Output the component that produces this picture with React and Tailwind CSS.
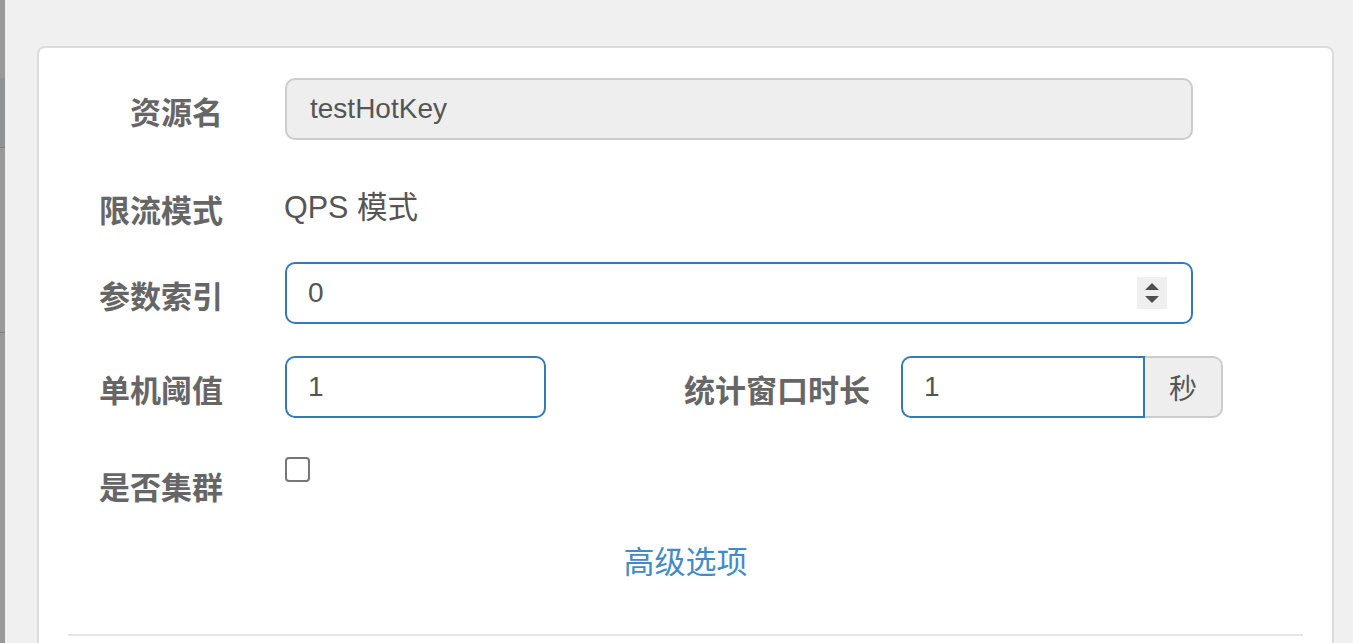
const label = "text-right font-bold text-[31px] leading-none text-[#666] [font-family:'Noto_Sans_CJK_SC',sans-serif]"
const latin = "[font-family:'Liberation_Sans','Noto_Sans_CJK_SC',sans-serif]"

function Spinner() {
  return (
    <div className="w-[30px] h-[32px] bg-[#efefef] flex items-center justify-center">
      <svg width="16" height="24" viewBox="0 0 16 24">
        <path d="M8 2 L15 9 L1 9 Z" fill="#4f4f4f" />
        <path d="M1 15 L15 15 L8 22 Z" fill="#4f4f4f" />
      </svg>
    </div>
  )
}

export default function App() {
  return (
    <div className="h-[643px] overflow-hidden bg-[#f0f0f0] flex">
      <div className="w-[5px] shrink-0 bg-[#999] flex flex-col">
        <div className="h-[78px]" />
        <div className="h-[69px] bg-[#8f9296]" />
        <div className="h-px bg-[#7f7f7f]" />
        <div className="h-[184px]" />
        <div className="h-px bg-[#7f7f7f]" />
      </div>

      <div className="ml-[32px] mt-[46px] w-[1297px] h-[640px] shrink-0 bg-white border-2 border-b-0 border-[#dcdcdc] rounded-t-[8px] pt-[30px]">
        <div className="flex items-center h-[62px]">
          <div className={`w-[184px] pt-[3px] ${label}`}>资源名</div>
          <div className={`ml-[62px] w-[908px] h-[62px] bg-[#eee] border-2 border-[#ccc] rounded-[10px] flex items-center pl-[23px] text-[28px] text-[#555] ${latin}`}>
            testHotKey
          </div>
        </div>

        <div className="flex items-center h-[62px] mt-[37px]">
          <div className={`w-[184px] ${label}`}>限流模式</div>
          <div className={`ml-[61px] text-[30.5px] text-[#555] ${latin}`}>QPS 模式</div>
        </div>

        <div className="flex items-center h-[62px] mt-[23px]">
          <div className={`w-[184px] pt-[2px] ${label}`}>参数索引</div>
          <div className={`ml-[62px] w-[908px] h-[62px] border-2 border-[#337ab7] rounded-[10px] flex items-center justify-between pl-[21px] pr-[24px] text-[28px] text-[#555] ${latin}`}>
            <span>0</span>
            <Spinner />
          </div>
        </div>

        <div className="flex items-center h-[62px] mt-[32px]">
          <div className={`w-[184px] pt-[2px] ${label}`}>单机阈值</div>
          <div className={`ml-[62px] w-[261px] h-[62px] border-2 border-[#337ab7] rounded-[10px] flex items-center pl-[21px] text-[28px] text-[#555] ${latin}`}>
            1
          </div>
          <div className={`w-[324px] pt-[2px] ${label}`}>统计窗口时长</div>
          <div className="ml-[31px] flex h-[62px]">
            <div className={`w-[244px] h-full border-2 border-[#337ab7] rounded-l-[10px] flex items-center pl-[21px] text-[28px] text-[#555] ${latin}`}>
              1
            </div>
            <div className="w-[78px] h-full bg-[#eee] border-2 border-l-0 border-[#ccc] rounded-r-[10px] flex items-center justify-center text-[28px] text-[#555] [font-family:'Noto_Sans_CJK_SC',sans-serif]">
              秒
            </div>
          </div>
        </div>

        <div className="flex h-[62px] mt-[36px]">
          <div className={`w-[184px] ${label} self-center`}>是否集群</div>
          <div className="ml-[62px] mt-[3px] w-[25px] h-[25px] border-2 border-[#767676] rounded-[4px] bg-white" />
        </div>

        <div className="mt-[24px] h-[40px] flex items-center justify-center text-[31px] text-[#428bca] [font-family:'Noto_Sans_CJK_SC',sans-serif]">
          高级选项
        </div>

        <div className="mt-[54px] mx-[29px] h-[2px] bg-[#e5e5e5]" />
      </div>
    </div>
  )
}
